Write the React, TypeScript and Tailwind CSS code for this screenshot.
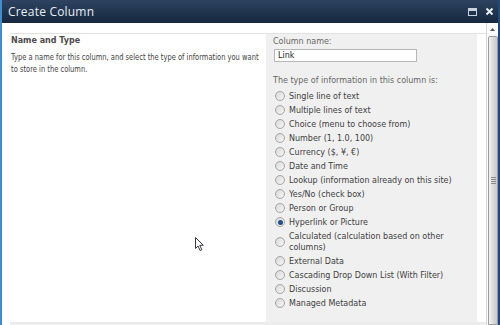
const types = [
  { label: 'Single line of text' },
  { label: 'Multiple lines of text' },
  { label: 'Choice (menu to choose from)' },
  { label: 'Number (1, 1.0, 100)' },
  { label: 'Currency ($, ¥, €)' },
  { label: 'Date and Time' },
  { label: 'Lookup (information already on this site)' },
  { label: 'Yes/No (check box)' },
  { label: 'Person or Group' },
  { label: 'Hyperlink or Picture', checked: true },
  { label: 'Calculated (calculation based on other columns)' },
  { label: 'External Data' },
  { label: 'Cascading Drop Down List (With Filter)' },
  { label: 'Discussion' },
  { label: 'Managed Metadata' },
];

const Radio = ({ checked }: { checked?: boolean }) => (
  <span className="flex h-[10px] w-[10px] shrink-0 items-center justify-center rounded-full border border-[#a3a3a3] bg-gradient-to-br from-[#d9d9d9] to-[#f7f7f7]">
    {checked && <span className="h-[5px] w-[5px] rounded-full bg-[#1e4f8a]" />}
  </span>
);

const TypeOption = ({ label, checked }: { label: string; checked?: boolean }) => (
  <div className="flex items-center gap-[4px] py-[1.5px] pl-[9px] pr-2 leading-[11px]">
    <Radio checked={checked} />
    <span>{label}</span>
  </div>
);

const Cursor = () => (
  <svg className="absolute left-[193px] top-[237px]" width="10" height="15" viewBox="0 0 10 15">
    <path d="M0.5 0.5 L0.5 11.5 L3 9 L5 13.5 L6.8 12.7 L4.8 8.3 L8.3 8.3 Z" fill="#fff" stroke="#3a3a48" strokeWidth="1" strokeLinejoin="round" />
  </svg>
);

const App = () => {
  return (
    <div className="relative flex h-[325px] w-[500px] flex-col overflow-hidden border-l-2 border-r-2 border-l-[#3c8fd3] border-r-[#1c4a7e] bg-white font-['DejaVu_Sans',Verdana,sans-serif] text-[8px] text-[#3f3f3f]">
      {/* title bar */}
      <div className="flex h-[23px] shrink-0 items-center bg-gradient-to-b from-[#2d4360] to-[#17283e] pl-[6px] pr-[4px]">
        <span className="font-['Open_Sans',sans-serif] text-[12px] tracking-[0.2px] text-[#e6edf5]">Create Column</span>
        <div className="ml-auto flex items-center gap-[8px]">
          <span className="flex h-[8px] w-[9px] flex-col border border-[#c9d3de]">
            <span className="h-[2px] bg-[#c9d3de]" />
          </span>
          <svg width="9" height="9" viewBox="0 0 9 9">
            <path d="M1.5 1.5 L7.5 7.5 M7.5 1.5 L1.5 7.5" stroke="#e6edf5" strokeWidth="2" />
          </svg>
        </div>
      </div>

      <div className="flex min-h-0 flex-1">
        {/* content */}
        <div className="flex w-[485px] flex-col pl-[8px] pt-[10px]">
          <div className="flex flex-1 border-t border-[#e2e2e2]">
            <div className="w-[256px] pl-[1px] pt-[1px]">
              <div className="font-bold leading-[12px] text-[#4c4c4c]">Name and Type</div>
              <p className="mt-[5px] w-fit origin-left scale-x-[0.84] whitespace-nowrap leading-[12px]">
                Type a name for this column, and select the type of information you want
                <br />
                to store in the column.
              </p>
            </div>
            <div className="w-[211px] bg-[#f0f0f0] pt-[2px] text-[#404040]">
              <div className="pl-[7px] leading-[12px] text-[#666]">Column name:</div>
              <div className="ml-[8px] mt-[1px] flex h-[13px] w-[143px] items-center border border-[#b8b8b8] bg-white pl-[3px] text-[#222]">
                Link
              </div>
              <div className="mt-[13px] pl-[7px] leading-[12px] text-[#666]">The type of information in this column is:</div>
              <div className="mt-[2px]">
                {types.map((t) => (
                  <TypeOption key={t.label} label={t.label} checked={t.checked} />
                ))}
              </div>
            </div>
          </div>
          <div className="h-[3px] shrink-0 bg-[#ececec]" />
        </div>

        {/* scrollbar */}
        <div className="ml-auto flex w-[12px] flex-col border-l border-[#d6d6d6] bg-[#fbfbfb]">
          <div className="flex h-[13px] items-center justify-center">
            <svg width="5" height="3" viewBox="0 0 5 3">
              <path d="M0 3 L2.5 0 L5 3 Z" fill="#555" />
            </svg>
          </div>
          <div className="ml-[1px] flex flex-1 items-center justify-center rounded-t-[2px] border border-[#9c9c9c] bg-gradient-to-r from-[#f4f4f4] via-[#dcdcdc] to-[#c9c9c9]">
            <div className="flex flex-col gap-[1px]">
              <span className="h-px w-[5px] bg-[#8a8a8a]" />
              <span className="h-px w-[5px] bg-[#8a8a8a]" />
              <span className="h-px w-[5px] bg-[#8a8a8a]" />
              <span className="h-px w-[5px] bg-[#8a8a8a]" />
            </div>
          </div>
        </div>
      </div>

      <Cursor />
    </div>
  );
};

export default App;
